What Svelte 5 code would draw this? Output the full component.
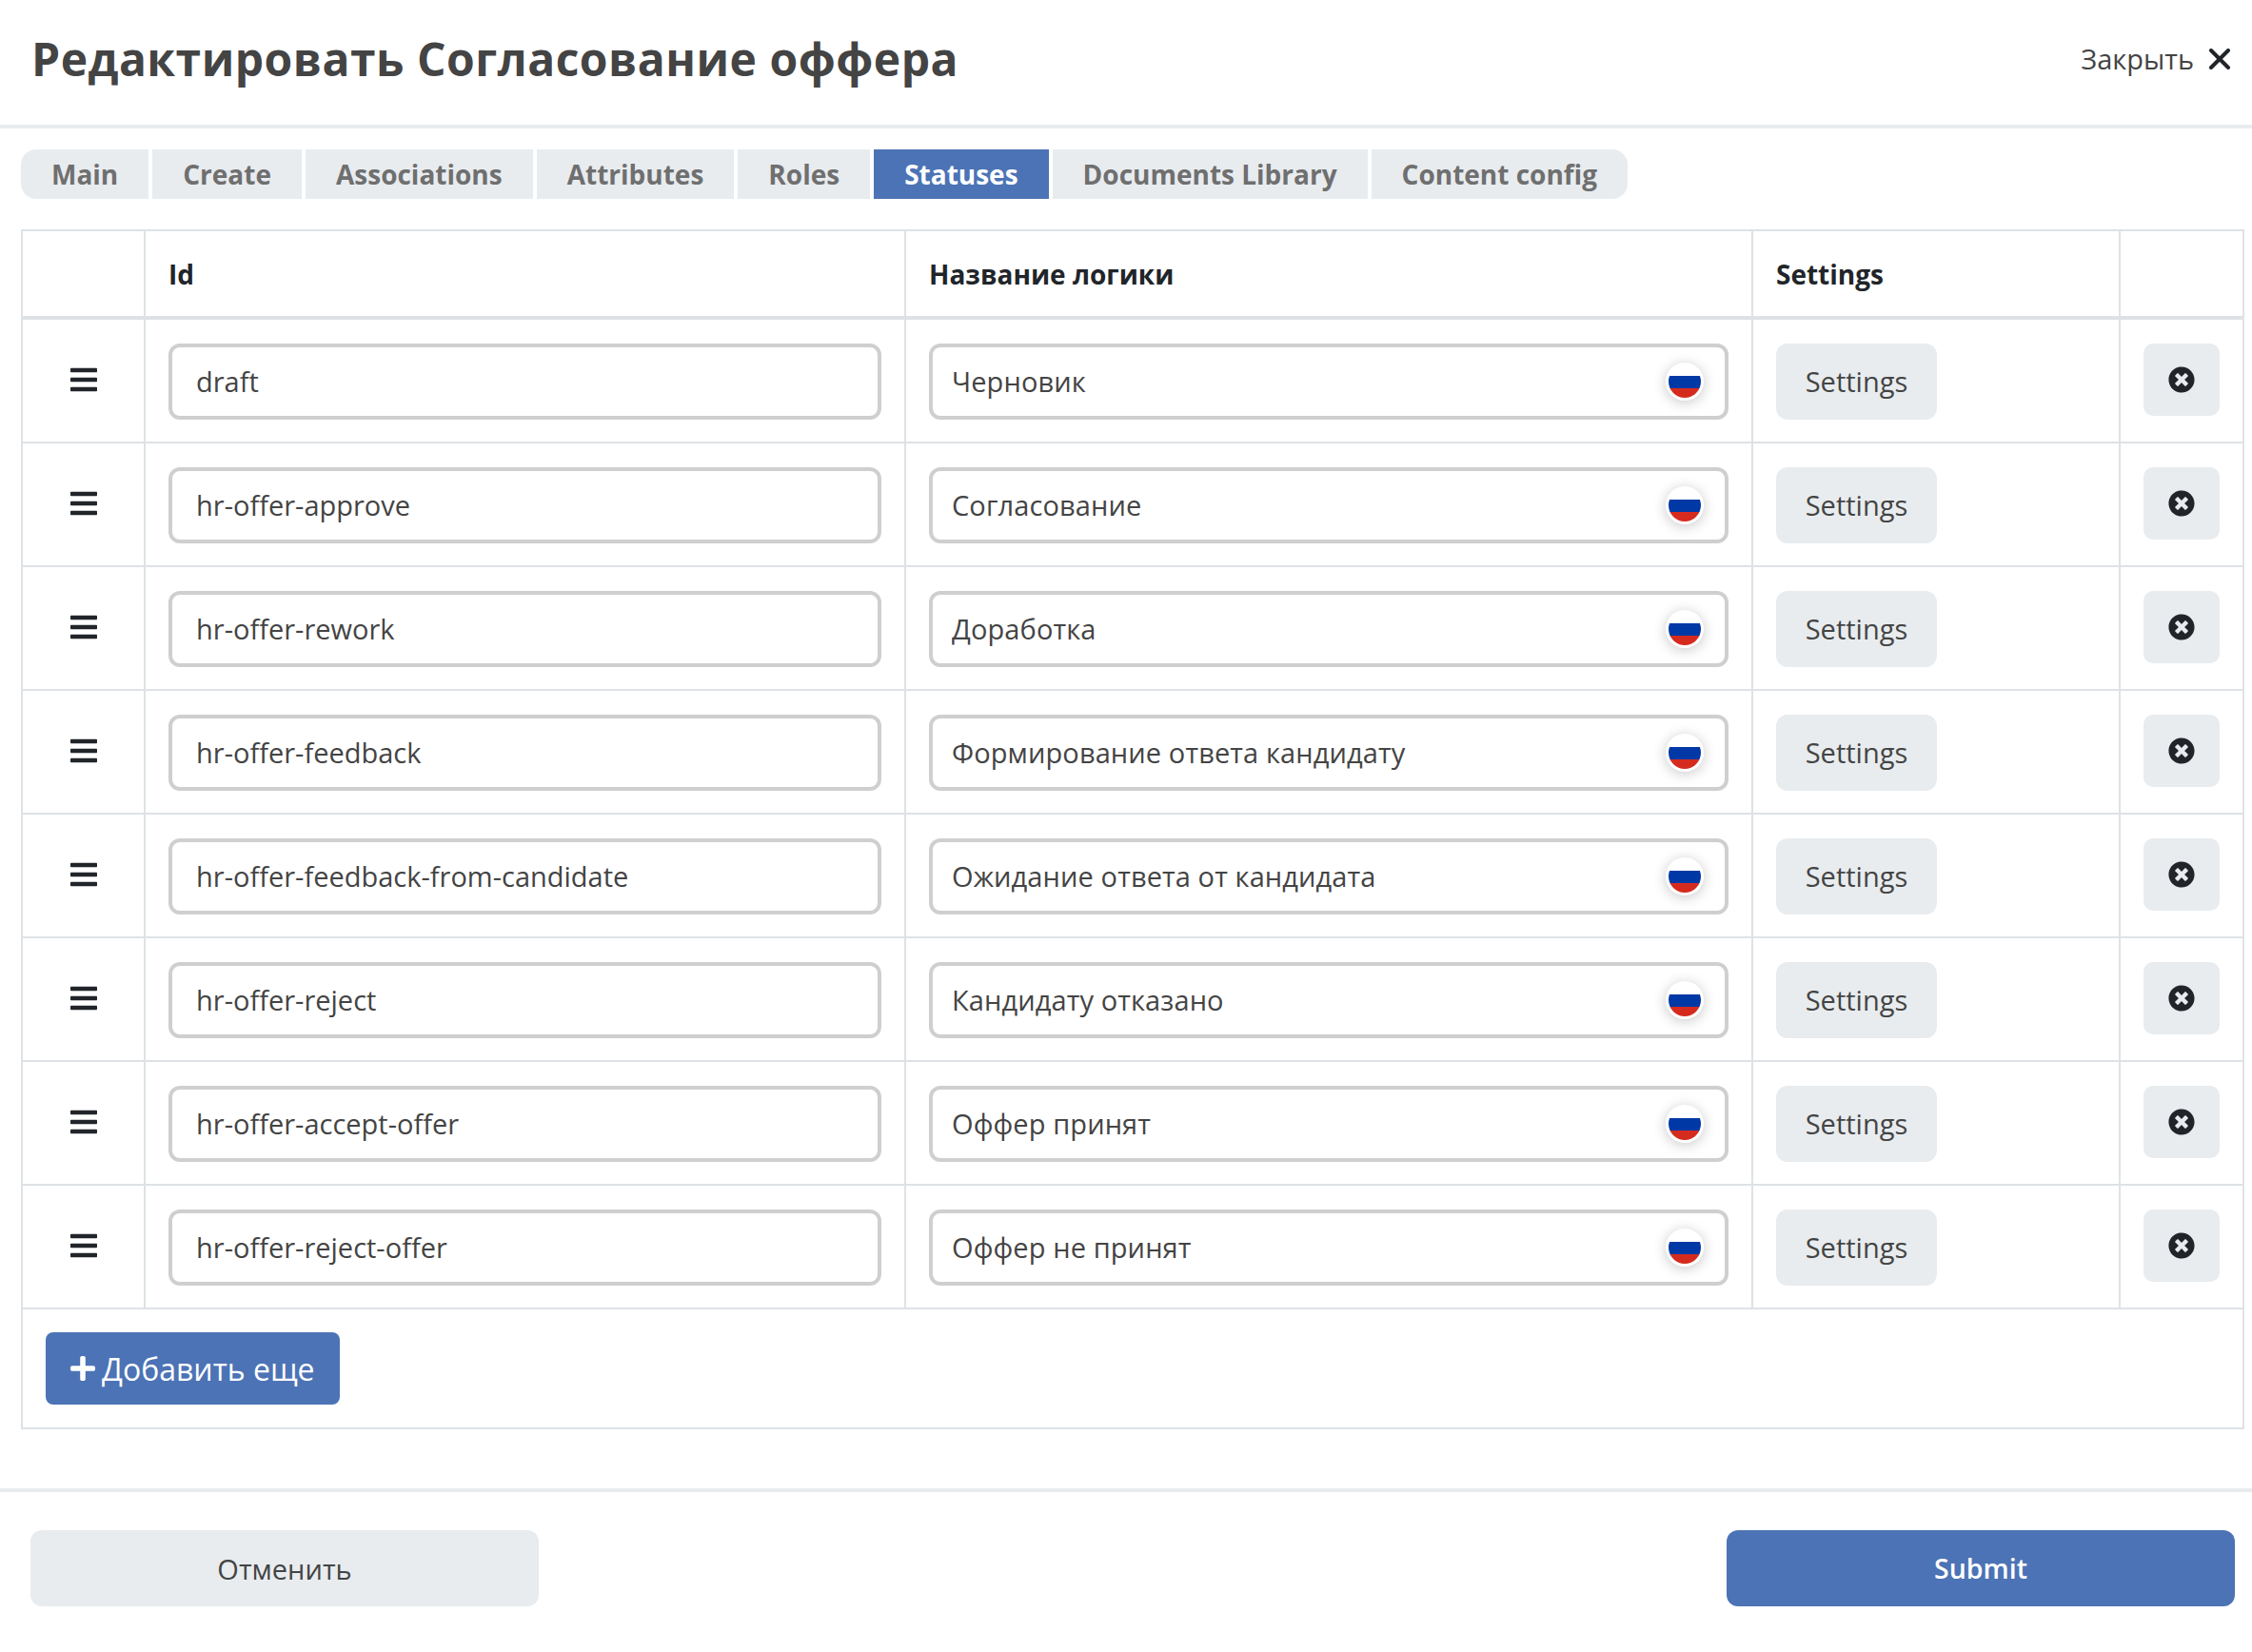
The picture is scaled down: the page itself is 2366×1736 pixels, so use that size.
<script>
	const tabs = ['Main', 'Create', 'Associations', 'Attributes', 'Roles', 'Statuses', 'Documents Library', 'Content config'];
	const activeTab = 'Statuses';
	const rows = [
		{ id: 'draft', name: 'Черновик' },
		{ id: 'hr-offer-approve', name: 'Согласование' },
		{ id: 'hr-offer-rework', name: 'Доработка' },
		{ id: 'hr-offer-feedback', name: 'Формирование ответа кандидату' },
		{ id: 'hr-offer-feedback-from-candidate', name: 'Ожидание ответа от кандидата' },
		{ id: 'hr-offer-reject', name: 'Кандидату отказано' },
		{ id: 'hr-offer-accept-offer', name: 'Оффер принят' },
		{ id: 'hr-offer-reject-offer', name: 'Оффер не принят' }
	];
</script>

<div class="page">
	<header class="head">
		<h1>Редактировать Согласование оффера</h1>
		<button class="close" type="button">
			<span>Закрыть</span>
			<svg viewBox="0 0 22 22" width="22" height="22" aria-hidden="true">
				<path d="M2 2L20 20M20 2L2 20" stroke="#212529" stroke-width="4" stroke-linecap="round" />
			</svg>
		</button>
	</header>

	<nav class="tabs">
		{#each tabs as tab}
			<button class="tab" class:active={tab === activeTab} type="button">{tab}</button>
		{/each}
	</nav>

	<table>
		<colgroup>
			<col class="c-drag" />
			<col class="c-id" />
			<col class="c-name" />
			<col class="c-settings" />
			<col class="c-del" />
		</colgroup>
		<thead>
			<tr>
				<th></th>
				<th>Id</th>
				<th>Название логики</th>
				<th>Settings</th>
				<th></th>
			</tr>
		</thead>
		<tbody>
			{#each rows as row}
				<tr>
					<td class="drag">
						<svg viewBox="0 0 448 512" width="28" height="32" aria-hidden="true">
							<path
								fill="#212529"
								d="M16 132h416c8.837 0 16-7.163 16-16V76c0-8.837-7.163-16-16-16H16C7.163 60 0 67.163 0 76v40c0 8.837 7.163 16 16 16zm0 160h416c8.837 0 16-7.163 16-16v-40c0-8.837-7.163-16-16-16H16c-8.837 0-16 7.163-16 16v40c0 8.837 7.163 16 16 16zm0 160h416c8.837 0 16-7.163 16-16v-40c0-8.837-7.163-16-16-16H16c-8.837 0-16 7.163-16 16v40c0 8.837 7.163 16 16 16z"
							/>
						</svg>
					</td>
					<td><input class="field" type="text" value={row.id} /></td>
					<td>
						<div class="localized">
							<input class="field" type="text" value={row.name} />
							<span class="flag">
								<svg viewBox="0 0 34 34" width="34" height="34" aria-hidden="true">
									<clipPath id="flag-clip"><circle cx="17" cy="17" r="17" /></clipPath>
									<g clip-path="url(#flag-clip)">
										<rect width="34" height="11" fill="#fff" />
										<rect y="11" width="34" height="13" fill="#0039a6" />
										<rect y="24" width="34" height="10" fill="#d52b1e" />
									</g>
								</svg>
							</span>
						</div>
					</td>
					<td><button class="btn-settings" type="button">Settings</button></td>
					<td>
						<button class="btn-del" type="button" aria-label="Удалить">
							<svg viewBox="0 0 512 512" width="28" height="28" aria-hidden="true">
								<path
									fill="#212529"
									d="M256 8C119 8 8 119 8 256s111 248 248 248 248-111 248-248S393 8 256 8zm121.6 313.1c4.7 4.7 4.7 12.3 0 17L338 377.6c-4.7 4.7-12.3 4.7-17 0L256 312l-65.1 65.6c-4.7 4.7-12.3 4.7-17 0L134.4 338c-4.7-4.7-4.7-12.3 0-17l65.6-65-65.6-65.1c-4.7-4.7-4.7-12.3 0-17l39.6-39.6c4.7-4.7 12.3-4.7 17 0l65 65.7 65.1-65.6c4.7-4.7 12.3-4.7 17 0l39.6 39.6c4.7 4.7 4.7 12.3 0 17L312 256l65.6 65.1z"
								/>
							</svg>
						</button>
					</td>
				</tr>
			{/each}
		</tbody>
		<tfoot>
			<tr>
				<td colspan="5">
					<button class="btn-add" type="button">
						<svg viewBox="0 32 448 448" width="26" height="26" aria-hidden="true">
							<path
								fill="#fff"
								d="M416 208H272V64c0-17.67-14.33-32-32-32h-32c-17.67 0-32 14.33-32 32v144H32c-17.67 0-32 14.33-32 32v32c0 17.67 14.33 32 32 32h144v144c0 17.67 14.33 32 32 32h32c17.67 0 32-14.33 32-32V304h144c17.67 0 32-14.33 32-32v-32c0-17.67-14.33-32-32-32z"
							/>
						</svg>
						Добавить еще
					</button>
				</td>
			</tr>
		</tfoot>
	</table>

	<footer class="foot">
		<button class="btn-cancel" type="button">Отменить</button>
		<button class="btn-submit" type="button">Submit</button>
	</footer>
</div>

<style>
	:global(body) {
		margin: 0;
		background: #fff;
	}
	.page {
		width: 2366px;
		font-family: 'Open Sans', sans-serif;
		font-size: 29px;
		color: #444;
	}
	button,
	input {
		font: inherit;
	}
	.head {
		display: flex;
		align-items: center;
		justify-content: space-between;
		height: 135px;
		padding: 0 23px 8px 33px;
		box-sizing: border-box;
		border-bottom: 4px solid #e8ecef;
	}
	h1 {
		margin: 0;
		font-size: 48px;
		font-weight: 700;
		letter-spacing: 0.5px;
		color: #444;
	}
	.close {
		display: flex;
		align-items: center;
		gap: 16px;
		padding: 0;
		border: none;
		background: none;
		color: #444;
		cursor: pointer;
	}
	.tabs {
		display: flex;
		gap: 4px;
		margin: 22px 0 32px 22px;
		height: 52px;
	}
	.tab {
		padding: 0 32px;
		border: none;
		background: #e8ecef;
		color: #6f6f6f;
		font-size: 28px;
		font-weight: 700;
		cursor: pointer;
	}
	.tab:first-child {
		border-radius: 16px 0 0 16px;
	}
	.tab:last-child {
		border-radius: 0 16px 16px 0;
	}
	.tab.active {
		background: #4c73b5;
		color: #fff;
	}
	table {
		width: 2336px;
		margin-left: 22px;
		border-collapse: collapse;
		table-layout: fixed;
	}
	.c-drag {
		width: 129px;
	}
	.c-id {
		width: 799px;
	}
	.c-name {
		width: 890px;
	}
	.c-settings {
		width: 386px;
	}
	th,
	td {
		border: 2px solid #dee2e6;
		padding: 25px 24px 23px;
		box-sizing: border-box;
		text-align: left;
		vertical-align: top;
	}
	th {
		height: 92px;
		padding: 22px 24px;
		vertical-align: middle;
		color: #212529;
		font-weight: 700;
		font-size: 28px;
		border-bottom-width: 4px;
	}
	td.drag {
		text-align: center;
		padding-top: 47px;
	}
	tfoot td {
		padding: 24px;
	}
	.drag svg {
		display: block;
		margin: 0 auto;
	}
	.field {
		display: block;
		width: 100%;
		height: 80px;
		box-sizing: border-box;
		padding: 0 25px 2px;
		border: 4px solid #cfcfcf;
		border-radius: 12px;
		background: #fff;
		color: #444;
		outline: none;
	}
	.localized {
		position: relative;
	}
	.localized .field {
		padding: 0 20px 2px;
		letter-spacing: 0.1px;
	}
	.flag {
		position: absolute;
		top: 20px;
		right: 26px;
		display: flex;
		align-items: center;
		justify-content: center;
		width: 40px;
		height: 40px;
		border-radius: 50%;
		background: #fff;
		box-shadow: 0 2px 14px rgba(0, 0, 0, 0.22);
	}
	.btn-settings {
		display: block;
		width: 169px;
		height: 80px;
		padding: 0 0 2px;
		border: none;
		border-radius: 12px;
		background: #e8ecef;
		color: #444;
		cursor: pointer;
	}
	.btn-del {
		display: flex;
		align-items: center;
		justify-content: center;
		width: 80px;
		height: 76px;
		padding: 0;
		border: none;
		border-radius: 10px;
		background: #e8ecef;
		cursor: pointer;
	}
	.btn-add {
		display: flex;
		align-items: center;
		gap: 7px;
		height: 76px;
		padding: 0 26px;
		border: none;
		border-radius: 8px;
		background: #4c73b5;
		color: #fff;
		font-size: 32px;
		cursor: pointer;
	}
	.foot {
		display: flex;
		justify-content: space-between;
		margin-top: 62px;
		padding: 40px 18px 0 32px;
		border-top: 4px solid #e8ecef;
	}
	.foot button {
		width: 534px;
		height: 80px;
		border: none;
		border-radius: 12px;
		cursor: pointer;
	}
	.btn-cancel {
		background: #e8ecef;
		color: #444;
		font-weight: 500;
	}
	.foot .btn-submit {
		background: #4c73b5;
		color: #fff;
		font-size: 28.5px;
		font-weight: 600;
	}
</style>
